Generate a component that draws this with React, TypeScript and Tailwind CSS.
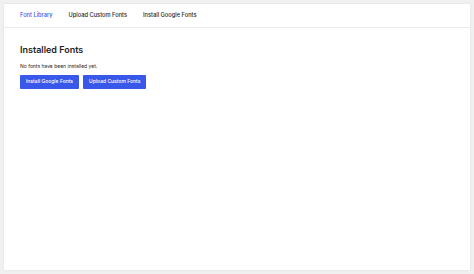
export default function App() {
  return (
    <div
      className="flex h-[274px] w-[474px] bg-[#f0f0f0] p-[4px]"
      style={{ fontFamily: "Inter, 'Noto Sans', sans-serif" }}
    >
      <div className="flex flex-1 flex-col bg-white shadow-[0_0_2px_rgba(0,0,0,0.08)]">
        <nav className="flex h-[24px] items-center gap-[16px] border-b border-[#ececec] px-[16px] text-[5.7px] font-medium text-[#1e1e1e]">
          <span className="text-[#3858e9]">Font Library</span>
          <span>Upload Custom Fonts</span>
          <span>Install Google Fonts</span>
        </nav>
        <main className="flex flex-col px-[16px] pt-[16px]">
          <h2 className="text-[9px] font-semibold leading-[12px] text-[#1e1e1e]">Installed Fonts</h2>
          <p className="mt-[7px] text-[5px] leading-[7px] text-[#1e1e1e]">No fonts have been installed yet.</p>
          <div className="mt-[5px] flex gap-[4px]">
            <button className="h-[14px] rounded-[1px] bg-[#3858e9] px-[6px] text-[5px] font-medium text-white">
              Install Google Fonts
            </button>
            <button className="h-[14px] rounded-[1px] bg-[#3858e9] px-[6px] text-[5px] font-medium text-white">
              Upload Custom Fonts
            </button>
          </div>
        </main>
      </div>
    </div>
  );
}
